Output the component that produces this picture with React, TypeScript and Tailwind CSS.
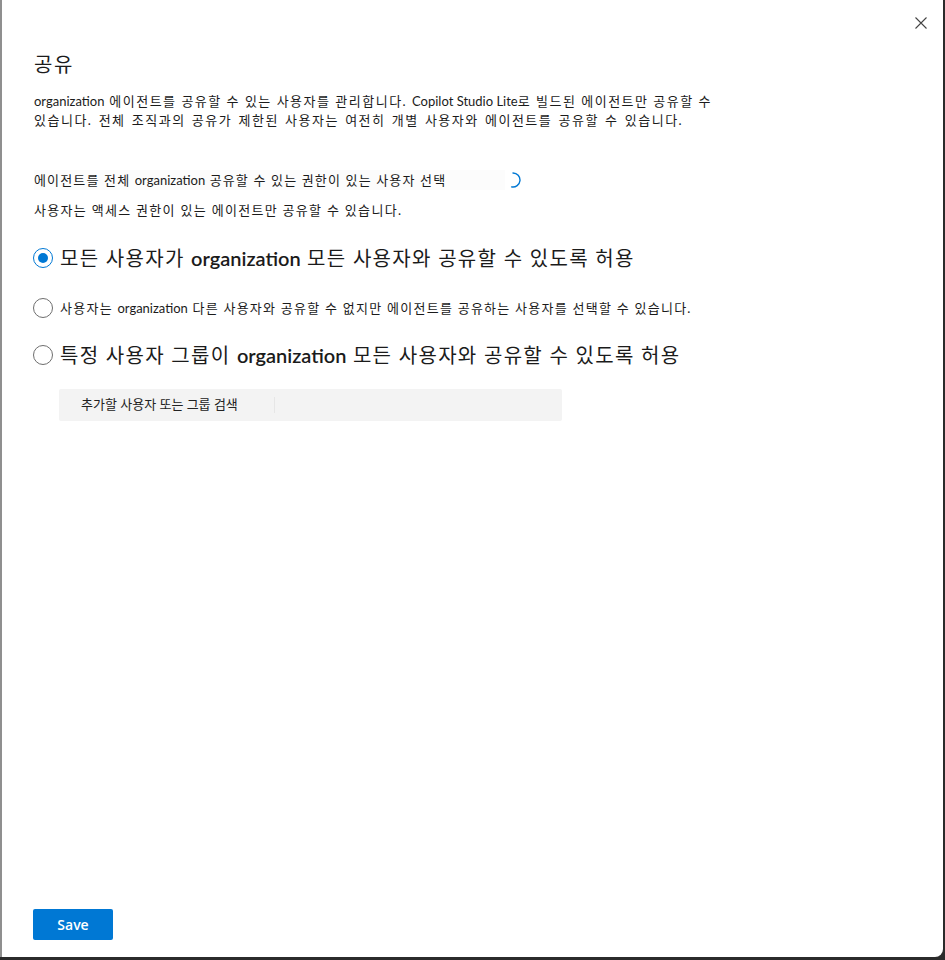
import React from 'react';

const FONT = "font-['Lato','Noto_Sans_CJK_KR',sans-serif]";

// latin runs keep normal tracking; hangul around them is spaced out
function L({ children, bold }: { children: React.ReactNode; bold?: boolean }) {
  return <span className={`tracking-normal ${bold ? 'font-semibold' : ''}`}>{children}</span>;
}

function Radio({ checked }: { checked?: boolean }) {
  return (
    <span
      className={`flex items-center justify-center w-5 h-5 shrink-0 rounded-full border-[1.5px] ${
        checked ? 'border-[#0078d4]' : 'border-[#6e6e6e]'
      }`}
    >
      {checked && <span className="block w-[10px] h-[10px] rounded-full bg-[#0078d4]" />}
    </span>
  );
}

export default function App() {
  return (
    <div className="w-[945px] h-[960px] bg-[#2b2b2b]">
      <div className={`w-[943px] h-[957px] bg-white border-l-2 border-[#8f8f8f] rounded-br-[8px] flex flex-col pl-[32px] text-[#1b1b1b] ${FONT}`}>
        {/* close */}
        <div className="flex justify-end pt-[17px] pr-[16px]">
          <button type="button" aria-label="Close" className="w-3 h-3">
            <svg width="12" height="12" viewBox="0 0 12 12" fill="none">
              <path d="M0.5 0.5L11.5 11.5M11.5 0.5L0.5 11.5" stroke="#444" strokeWidth="1.1" />
            </svg>
          </button>
        </div>

        <h2 className="mt-[21px] text-[20px] leading-[28px] font-normal tracking-[1.5px]">공유</h2>

        <p className="mt-[14px] text-[13px] leading-[19px] tracking-[1.5px] whitespace-nowrap">
          <L>organization</L> 에이전트를 공유할 수 있는 사용자를 관리합니다. <L>Copilot Studio Lite</L>로 빌드된 에이전트만 공유할 수
          <br />
          <span className="[word-spacing:1.4px]">
            있습니다. 전체 조직과의 공유가 제한된 사용자는 여전히 개별 사용자와 에이전트를 공유할 수 있습니다.
          </span>
        </p>

        <div className="mt-[40px] flex items-center h-5">
          <span className="w-[471px] text-[13px] leading-5 bg-[#fcfcfc] tracking-[1.15px] whitespace-nowrap">
            에이전트를 전체 <L>organization</L> 공유할 수 있는 권한이 있는 사용자 선택
          </span>
          <svg width="16" height="16" viewBox="0 0 16 16" fill="none">
            <path d="M8 1A7 7 0 1 1 6.6 14.86" stroke="#0078d4" strokeWidth="1.4" strokeLinecap="round" />
          </svg>
        </div>

        <p className="mt-[10px] text-[13px] leading-5 tracking-[1.3px]">
          사용자는 액세스 권한이 있는 에이전트만 공유할 수 있습니다.
        </p>

        <label className="mt-[24px] -ml-px flex items-center gap-[7px] h-[28px]">
          <Radio checked />
          <span className="text-[20px] leading-[28px] tracking-[1.3px] whitespace-nowrap">
            모든 사용자가 <L bold>organization</L> 모든 사용자와 공유할 수 있도록 허용
          </span>
        </label>

        <label className="mt-[26px] -ml-px flex items-center gap-[7px] h-5">
          <Radio />
          <span className="text-[13px] leading-5 tracking-[1.25px] whitespace-nowrap">
            사용자는 <L>organization</L> 다른 사용자와 공유할 수 없지만 에이전트를 공유하는 사용자를 선택할 수 있습니다.
          </span>
        </label>

        <label className="mt-[23px] -ml-px flex items-center gap-[7px] h-[28px]">
          <Radio />
          <span className="text-[20px] leading-[28px] tracking-[1.3px] whitespace-nowrap">
            특정 사용자 그룹이 <L bold>organization</L> 모든 사용자와 공유할 수 있도록 허용
          </span>
        </label>

        <div className="mt-[20px] ml-[25px] w-[503px] h-[32px] bg-[#f3f3f3] rounded-[2px] flex items-center pl-[22px]">
          <span className="text-[13px] text-[#222]">추가할 사용자 또는 그룹 검색</span>
          <span className="ml-[36px] w-px h-4 bg-[#e6e6e6]" />
        </div>

        <div className="mt-auto mb-[17px] -ml-px">
          <button
            type="button"
            className="w-[80px] h-[31px] bg-[#0078d4] rounded-[2px] text-white text-[14px] font-semibold font-['Open_Sans',sans-serif]"
          >
            Save
          </button>
        </div>
      </div>
    </div>
  );
}
